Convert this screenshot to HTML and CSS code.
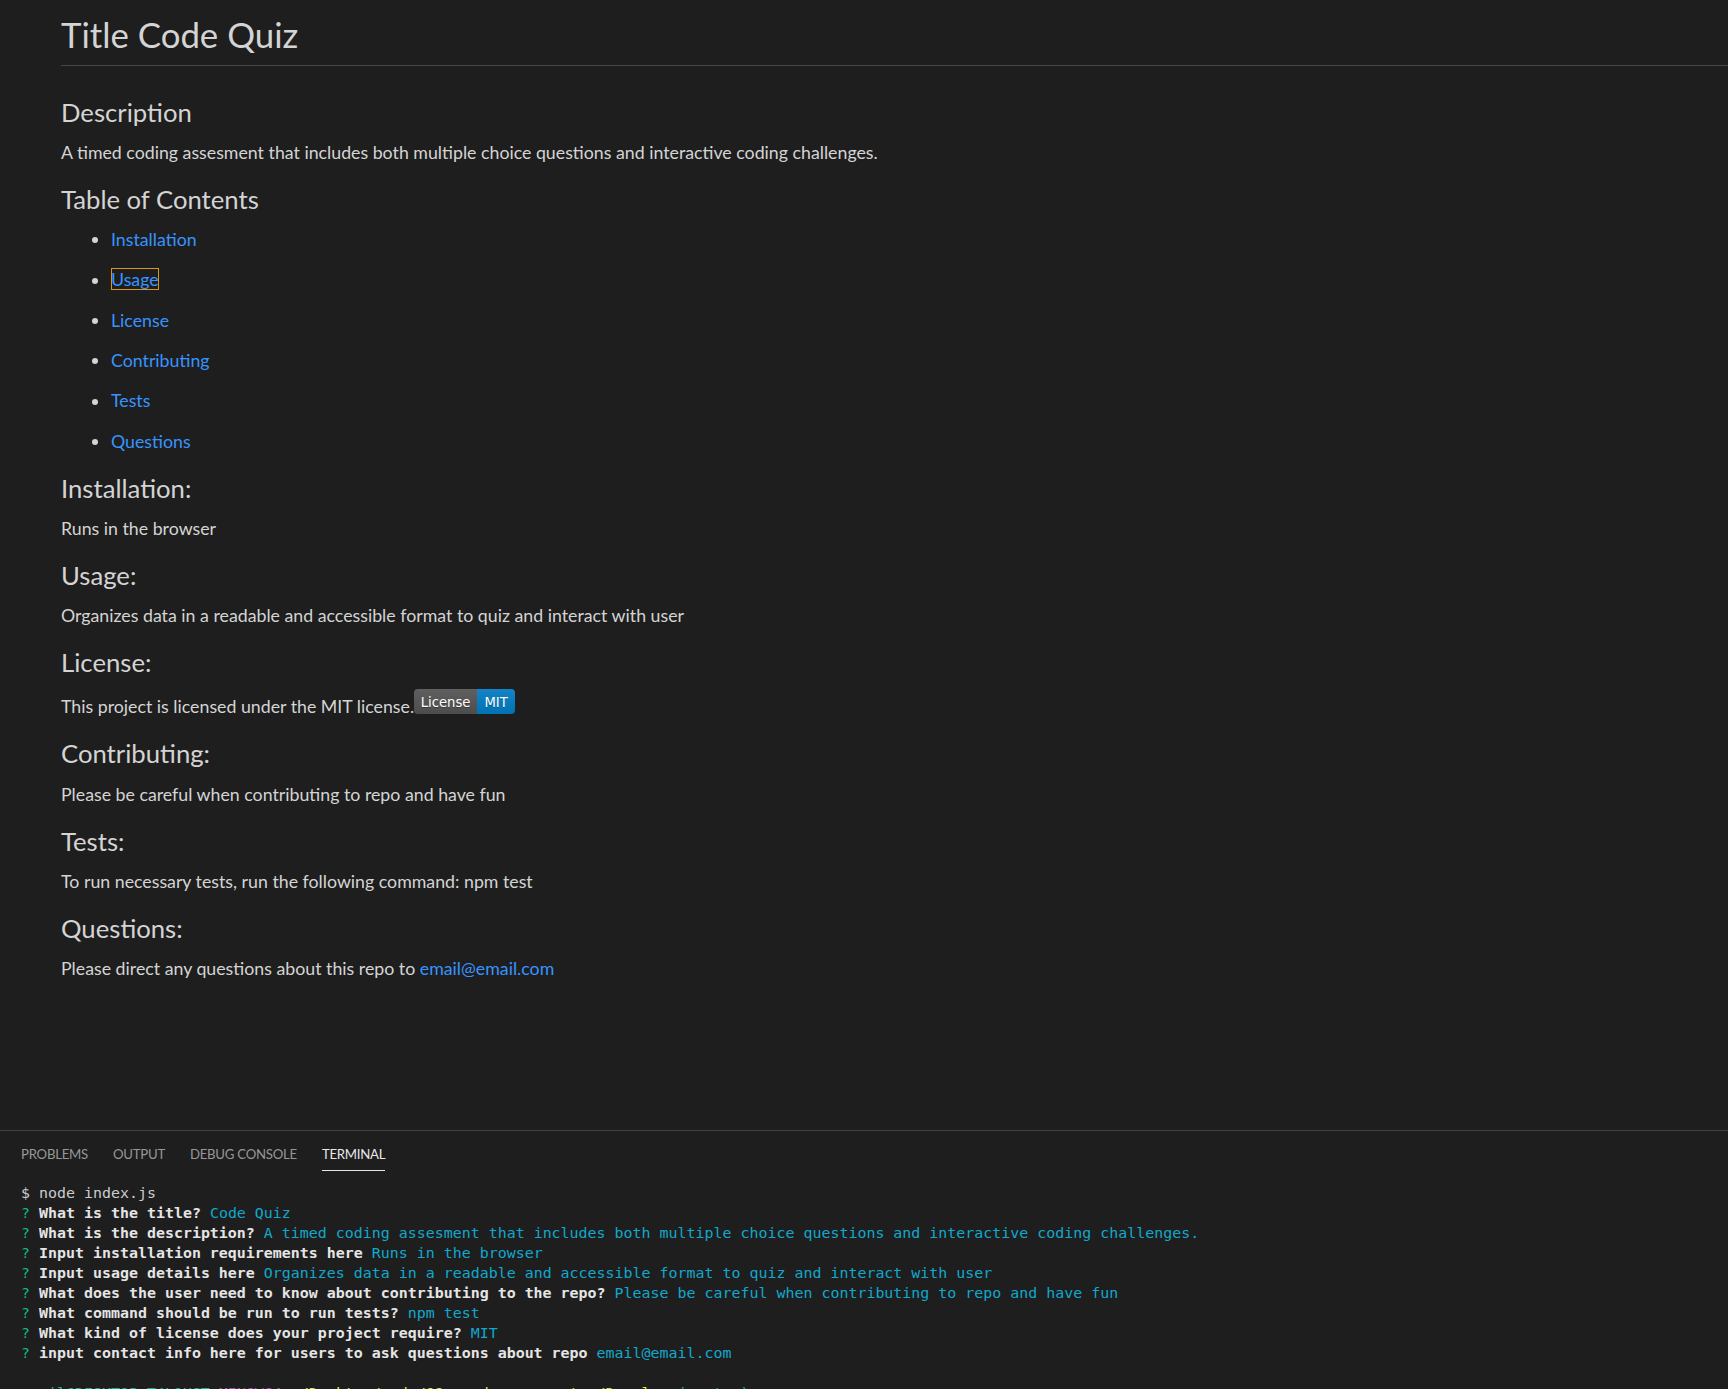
FILE: index.html
```html
<!DOCTYPE html>
<html lang="en">
<head>
<meta charset="utf-8">
<title>README preview</title>
<link rel="stylesheet" href="styles.css">
</head>
<body>
<main class="preview">
  <h1 class="title">Title Code Quiz</h1>

  <h2 class="heading">Description</h2>
  <p class="text">A timed coding assesment that includes both multiple choice questions and interactive coding challenges.</p>

  <h2 class="heading">Table of Contents</h2>
  <ul class="toc">
    <li><a class="link" href="#installation">Installation</a></li>
    <li><a class="link focused" href="#usage">Usage</a></li>
    <li><a class="link" href="#license">License</a></li>
    <li><a class="link" href="#contributing">Contributing</a></li>
    <li><a class="link" href="#tests">Tests</a></li>
    <li><a class="link" href="#questions">Questions</a></li>
  </ul>

  <h2 class="heading" id="installation">Installation:</h2>
  <p class="text">Runs in the browser</p>

  <h2 class="heading" id="usage">Usage:</h2>
  <p class="text">Organizes data in a readable and accessible format to quiz and interact with user</p>

  <h2 class="heading" id="license">License:</h2>
  <p class="text">This project is licensed under the MIT license.<span class="badge"><span class="badge-l">License</span><span class="badge-r">MIT</span></span></p>

  <h2 class="heading" id="contributing">Contributing:</h2>
  <p class="text">Please be careful when contributing to repo and have fun</p>

  <h2 class="heading" id="tests">Tests:</h2>
  <p class="text">To run necessary tests, run the following command: npm test</p>

  <h2 class="heading" id="questions">Questions:</h2>
  <p class="text">Please direct any questions about this repo to <a class="link" href="mailto:email@email.com">email@email.com</a></p>
</main>

<section class="panel">
  <nav class="tabs">
    <span class="tab">PROBLEMS</span>
    <span class="tab">OUTPUT</span>
    <span class="tab">DEBUG CONSOLE</span>
    <span class="tab active">TERMINAL</span>
  </nav>
  <div class="term">
    <div class="line">$ node index.js</div>
    <div class="line"><span class="q">?</span> <b class="ask">What is the title?</b> <span class="ans">Code Quiz</span></div>
    <div class="line"><span class="q">?</span> <b class="ask">What is the description?</b> <span class="ans">A timed coding assesment that includes both multiple choice questions and interactive coding challenges.</span></div>
    <div class="line"><span class="q">?</span> <b class="ask">Input installation requirements here</b> <span class="ans">Runs in the browser</span></div>
    <div class="line"><span class="q">?</span> <b class="ask">Input usage details here</b> <span class="ans">Organizes data in a readable and accessible format to quiz and interact with user</span></div>
    <div class="line"><span class="q">?</span> <b class="ask">What does the user need to know about contributing to the repo?</b> <span class="ans">Please be careful when contributing to repo and have fun</span></div>
    <div class="line"><span class="q">?</span> <b class="ask">What command should be run to run tests?</b> <span class="ans">npm test</span></div>
    <div class="line"><span class="q">?</span> <b class="ask">What kind of license does your project require?</b> <span class="ans">MIT</span></div>
    <div class="line"><span class="q">?</span> <b class="ask">input contact info here for users to ask questions about repo</b> <span class="ans">email@email.com</span></div>
    <div class="line"> </div>
    <div class="line"><span class="p-user">email@DESKTOP-T4L1HGT</span> <span class="p-sys">MINGW64</span> <span class="p-path">~/Desktop/code/09-readme-generator/Develop</span><span class="p-git"> (master)</span></div>
    <div class="line">$ </div>
  </div>
</section>
</body>
</html>
```

FILE: styles.css
```css
* { box-sizing: border-box; }

html, body {
  margin: 0;
  padding: 0;
}

body {
  width: 1728px;
  height: 1389px;
  overflow: hidden;
  display: flex;
  flex-direction: column;
  background: #1e1e1e;
  color: #d4d4d4;
  font-family: "Lato", "Open Sans", sans-serif;
}

/* ---------- markdown preview ---------- */
.preview {
  flex: 1 1 auto;
  min-height: 0;
  overflow: hidden;
  padding: 14px 0 0 61px;
  font-size: 17.75px;
  line-height: 27.5px;
}

.title {
  margin: 0 0 31px;
  padding-bottom: 9px;
  border-bottom: 1px solid #474747;
  font-size: 34.8px;
  line-height: 1.2;
  font-weight: normal;
}

.heading {
  margin: 17.6px 0 11.3px;
  font-size: 25.7px;
  line-height: 1.2;
  font-weight: normal;
}

.text {
  margin: 0;
}

.link {
  color: #3794ff;
  text-decoration: none;
}

.focused {
  outline: 1px solid #d9961c;
  outline-offset: -1px;
}

.toc {
  list-style: none;
  margin: 0;
  padding: 0 0 0 50px;
}

.toc li {
  margin-bottom: 12.8px;
}

.toc li:last-child {
  margin-bottom: 0;
}

.toc li::before {
  content: "";
  display: inline-block;
  width: 6px;
  height: 6px;
  border-radius: 50%;
  background: #d4d4d4;
  margin: 0 13px 0 -19px;
  vertical-align: 2.7px;
}

/* shields-style badge */
.badge {
  display: inline-block;
  height: 25px;
  margin-left: 0;
  border-radius: 4px;
  overflow: hidden;
  white-space: nowrap;
  vertical-align: -1px;
  font-family: "DejaVu Sans", Verdana, sans-serif;
  font-size: 13.2px;
  line-height: 22px;
  color: #fff;
  text-shadow: 0 1px 0 rgba(1, 1, 1, 0.3);
}

.badge-l,
.badge-r {
  display: inline-block;
  vertical-align: top;
  height: 25px;
  padding-top: 3px;
  text-align: center;
  background-image: linear-gradient(rgba(187, 187, 187, 0.1), rgba(0, 0, 0, 0.1));
}

.badge-l {
  width: 63px;
  background-color: #555;
}

.badge-r {
  width: 38px;
  background-color: #007ec6;
}

/* ---------- bottom panel ---------- */
.panel {
  flex: 0 0 259px;
  overflow: hidden;
  border-top: 1px solid #414141;
}

.tabs {
  display: flex;
  gap: 25px;
  padding-left: 21px;
  font-size: 13.2px;
  line-height: 20px;
  letter-spacing: -0.25px;
}

.tab {
  padding: 12.9px 0 5.9px;
  border-bottom: 1px solid transparent;
  color: #979797;
}

.tab.active {
  color: #e7e7e7;
  border-bottom-color: #e7e7e7;
}

.term {
  margin-top: 12.3px;
  padding-left: 21px;
  font-family: "DejaVu Sans Mono", "Liberation Mono", monospace;
  font-size: 14.95px;
  line-height: 20px;
  color: #cccccc;
}

.line {
  white-space: pre;
  height: 20px;
}

.q { color: #0dbc79; }
.ask { color: #e5e5e5; font-weight: bold; }
.ans { color: #11a8cd; }
.p-user { color: #0dbc79; }
.p-sys { color: #bc3fbc; }
.p-path { color: #e5e510; }
.p-git { color: #11a8cd; }
```
